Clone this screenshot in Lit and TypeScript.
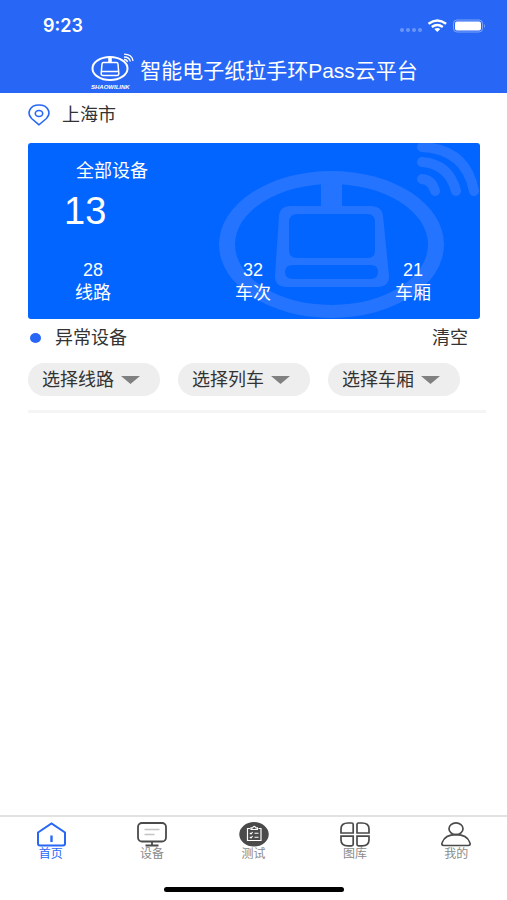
import { LitElement, html, css, svg } from "lit";
import { customElement, state } from "lit/decorators.js";
import { classMap } from "lit/directives/class-map.js";

const tabs = [
  {
    id: "home",
    label: "首页",
    icon: svg`<path d="M2 10.5 15.500 1.500 29 10.500V21.500Q29 23.500 27 23.500H4Q2 23.500 2 21.500Z" fill="none" stroke="currentColor" stroke-width="2"/><path d="M15.500 13.500V20" stroke="currentColor" stroke-width="2.400"/>`,
  },
  {
    id: "device",
    label: "设备",
    icon: svg`<rect x="1" y="1" width="28" height="18.5" rx="4" fill="none" stroke="currentColor" stroke-width="1.8"/><path d="M15 20V23.500M8.500 23.500H21.500" stroke="currentColor" stroke-width="1.8"/><path d="M7.500 7.500H22.500M7.500 12.500H17.500" stroke="#c4c4c4" stroke-width="1.4"/>`,
  },
  {
    id: "test",
    label: "测试",
    icon: svg`<ellipse cx="15" cy="12.3" rx="14.7" ry="12.2" fill="currentColor"/><path d="M11 6.5H8.500V18.500H22V6.500H19.500M12 7.500V5.800H13.600Q15.200 3 16.800 5.800H18.400V7.500Z" fill="none" stroke="#fff" stroke-width="1.2"/><path d="M10.800 11 12 12 13.600 10M10.800 15 12 16 13.600 14M15.500 11.300H19.500M15.500 15.300H19.500" fill="none" stroke="#fff" stroke-width="1.1"/>`,
  },
  {
    id: "gallery",
    label: "图库",
    icon: svg`<g fill="none" stroke="currentColor" stroke-width="1.7"><path d="M13.200 11H1V7Q1 1 8 1H11.500Q13.200 1 13.200 2.500Z"/><path d="M17 11H29V7Q29 1 22 1H18.500Q17 1 17 2.500Z"/><path d="M13.200 14.200H1V18Q1 23.800 8 23.800H11.500Q13.200 23.800 13.200 22.300Z"/><path d="M17 14.200H29V18Q29 23.800 22 23.800H18.500Q17 23.800 17 22.300Z"/></g>`,
  },
  {
    id: "mine",
    label: "我的",
    icon: svg`<g fill="none" stroke="currentColor" stroke-width="1.7"><ellipse cx="15" cy="6.800" rx="7" ry="5.900"/><path d="M3 23.500Q0 23.500 1.200 20.500C3 15.500 8.500 12.700 15 12.700S27 15.500 28.800 20.500Q30 23.500 27 23.500Z"/></g>`,
  },
];

const stats = [
  { value: 28, label: "线路" },
  { value: 32, label: "车次" },
  { value: 21, label: "车厢" },
];

const filters = ["选择线路", "选择列车", "选择车厢"];

@customElement("app-root")
export class AppRoot extends LitElement {
  @state() private active = "home";

  static styles = css`
    :host {
      display: flex;
      flex-direction: column;
      min-height: 100vh;
      background: #fff;
      color: #333;
      font-family: "Liberation Sans", "Noto Sans CJK SC", sans-serif;
      font-size: 18px;
      line-height: 24px;
    }
    * {
      box-sizing: border-box;
    }
    svg {
      display: block;
      flex: none;
    }
    header {
      background: #2867f6;
      color: #fff;
    }
    .status {
      display: flex;
      align-items: center;
      height: 49px;
      padding: 3px 21px 0 43px;
      font-family: Inter, sans-serif;
      font-weight: 600;
    }
    .status svg {
      margin-left: auto;
    }
    .brand {
      display: flex;
      justify-content: center;
      gap: 6px;
      height: 44px;
      padding-left: 2px;
    }
    .brand svg {
      margin-top: 4px;
    }
    h1 {
      margin: 0;
      font-size: 21px;
      line-height: 44px;
      font-weight: 400;
      white-space: nowrap;
    }
    main {
      flex: 1;
      padding: 0 27px 0 28px;
    }
    .city {
      display: flex;
      align-items: center;
      gap: 12px;
      height: 44px;
    }
    .card {
      position: relative;
      display: flex;
      flex-direction: column;
      justify-content: space-between;
      height: 176px;
      margin: 6px 0 0;
      padding: 16px 0 14px;
      border-radius: 3px;
      background: #0265ff;
      color: #fff;
      overflow: hidden;
    }
    .mark {
      position: absolute;
      top: 0;
      right: 0;
    }
    .total {
      position: relative;
      padding-left: 36px;
    }
    .total h2 {
      margin: 0;
      padding-left: 12px;
      font-size: 18px;
      font-weight: 400;
    }
    .total p {
      margin: 6px 0 0;
      font-size: 38px;
      line-height: 44px;
    }
    .stats {
      position: relative;
      display: flex;
      justify-content: space-between;
      margin: 0;
      padding: 0 49px 0 47px;
      text-align: center;
    }
    .stats div {
      display: flex;
      flex-direction: column-reverse;
    }
    .stats dd {
      margin: 0;
      line-height: 22px;
    }
    .alerts {
      display: flex;
      align-items: center;
      height: 38px;
      padding: 0 12px 0 2px;
    }
    .alerts h2 {
      margin: 0 auto 0 14px;
      font-size: 18px;
      font-weight: 400;
    }
    .dot {
      width: 11px;
      height: 10px;
      border-radius: 50%;
      background: #2867f6;
    }
    button {
      padding: 0;
      border: 0;
      background: none;
      color: inherit;
      font: inherit;
    }
    .filters {
      display: flex;
      gap: 18px;
      padding: 6px 0 14px;
    }
    .filter {
      position: relative;
      width: 132px;
    }
    .filter svg {
      position: absolute;
      top: 13px;
      right: 20px;
      pointer-events: none;
    }
    select {
      display: block;
      width: 100%;
      height: 33px;
      padding: 0 0 0 14px;
      border: 0;
      border-radius: 17px;
      appearance: none;
      background: #eee;
      color: inherit;
      font: inherit;
    }
    hr {
      height: 3px;
      margin: 0 -6px 0 0;
      border: 0;
      background: #f5f5f5;
    }
    nav {
      display: flex;
      border-top: 2px solid #e2e2e2;
      padding-top: 5px;
    }
    nav a {
      flex: 1;
      display: flex;
      flex-direction: column;
      align-items: center;
      color: #4a4a4a;
      font-size: 12px;
      line-height: 14px;
      text-decoration: none;
    }
    nav span {
      color: #8a8a8a;
    }
    nav .on,
    nav .on span {
      color: #2867f6;
    }
    .grip {
      width: 180px;
      height: 5px;
      margin: 26px auto 8px;
      border-radius: 3px;
      background: #000;
    }
  `;

  render() {
    return html`
      <header>
        <div class="status">
          <span>9:23</span>
          <svg width="87" height="16" viewBox="0 0 87 16" aria-hidden="true">
            <g fill="#fff" opacity=".3">
              <circle cx="3" cy="12" r="2" /><circle cx="9" cy="12" r="2" /><circle cx="15" cy="12" r="2" /><circle cx="21" cy="12" r="2" />
            </g>
            <g fill="none" stroke="#fff" stroke-width="2.4">
              <path d="M29.5 5.8Q38.3 -.8 47.1 5.8" />
              <path d="M32.8 9Q38.3 4.8 43.8 9" />
            </g>
            <path d="M35.3 11Q38.3 9 41.3 11L38.3 14Z" fill="#fff" />
            <rect x="54.5" y="2" width="29" height="12" rx="3.5" fill="none" stroke="#fff" opacity=".4" />
            <rect x="56" y="3.5" width="26" height="9" rx="2" fill="#fff" />
            <path d="M85 6Q87 8 85 10Z" fill="#fff" opacity=".4" />
          </svg>
        </div>
        <div class="brand">
          <svg width="43" height="38" viewBox="0 0 43 38" aria-hidden="true">
            <g fill="none" stroke="#fff">
              <ellipse cx="19" cy="15.5" rx="17.5" ry="11.5" stroke-width="2" />
              <path d="M19 4V9.5" stroke-width="3.6" />
              <path d="M12.5 9.5H25.5Q26.8 9.5 27 11L27.8 20.5Q27.8 22.5 26 22.5H12Q10.2 22.5 10.2 20.5L11 11Q11.2 9.5 12.5 9.5ZM11 18.5H27" stroke-width="1.5" />
              <path d="M33 6.5Q36 6.5 36.5 9M33 4Q38.5 4 39.3 8.5M33 1.2Q41 1.2 42 8" stroke-width="1.3" />
            </g>
            <text x="0" y="36" fill="#fff" font-size="6" font-weight="700" font-style="italic">SHAOWILINK</text>
          </svg>
          <h1>智能电子纸拉手环Pass云平台</h1>
        </div>
      </header>
      <main>
        <div class="city">
          <svg width="22" height="22" viewBox="0 0 22 22" fill="none" stroke="#2867f6" stroke-width="1.6" aria-hidden="true">
            <path d="M11 20.8 3.6 14.5C-1.5 9.5 1.5 1 11 1S23.5 9.5 18.4 14.5Z" />
            <ellipse cx="11" cy="9.5" rx="3.7" ry="3" />
          </svg>
          <span>上海市</span>
        </div>
        <section class="card">
          <svg class="mark" width="262" height="176" viewBox="0 0 262 176" fill="none" stroke="#2474ff" aria-hidden="true">
            <path fill="#2474ff" stroke="none" fill-rule="evenodd" d="M1 101.5A112.5 73.5 0 0 1 226 101.5A112.5 73.5 0 0 1 1 101.5ZM17 101.5A96.5 60.5 0 0 0 210 101.5A96.5 60.5 0 0 0 17 101.5Z" />
            <path d="M113.5 36V64" stroke-width="21" />
            <path fill="#2474ff" stroke="none" fill-rule="evenodd" d="M72 63H153Q164 63 165 73L171 133Q171 144 159 144H69Q57 144 57 133L61 73Q62 63 72 63ZM80 71Q71 71 71 79V108Q71 115 80 115H149Q157 115 157 108V79Q157 71 149 71ZM75 122Q67 122 67 129T75 136H153Q160 136 160 129T153 122Z" />
            <path d="M204 36Q214 37 217 48M204 19Q231 21 238 48M204 4Q248 6 256 48" stroke-width="10" stroke-linecap="round" />
          </svg>
          <div class="total">
            <h2>全部设备</h2>
            <p>13</p>
          </div>
          <dl class="stats">
            ${stats.map((s) => html`<div><dt>${s.label}</dt><dd>${s.value}</dd></div>`)}
          </dl>
        </section>
        <section>
          <div class="alerts">
            <i class="dot"></i>
            <h2>异常设备</h2>
            <button type="button">清空</button>
          </div>
          <div class="filters">
            ${filters.map(
              (f) => html`<div class="filter">
                <select aria-label=${f}><option>${f}</option></select>
                <svg width="19" height="8" viewBox="0 0 19 8" aria-hidden="true"><path d="M0 0H19L9.5 8Z" fill="#808080" /></svg>
              </div>`
            )}
          </div>
          <hr />
        </section>
      </main>
      <footer>
        <nav>
          ${tabs.map(
            (t) => html`<a href="#${t.id}" class=${classMap({ on: t.id === this.active })} @click=${() => (this.active = t.id)}>
              <svg width="30" height="25" viewBox="0 0 30 25" aria-hidden="true">${t.icon}</svg>
              <span>${t.label}</span>
            </a>`
          )}
        </nav>
        <div class="grip"></div>
      </footer>
    `;
  }
}
